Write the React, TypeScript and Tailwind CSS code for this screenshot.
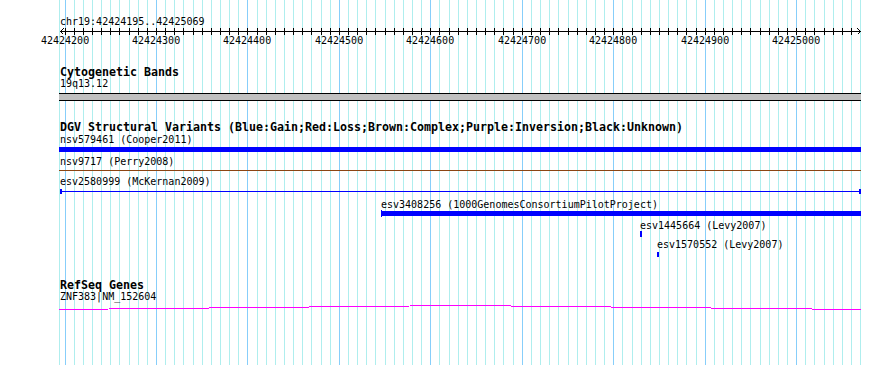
import React from 'react'

// genome coordinates -> pixels (same scale as the ruler)
const START = 42424200
const PX = 0.91456
const xOf = (pos: number) => Math.floor(65 + (pos - START) * PX)

const gridPositions = Array.from({ length: 88 }, (_, i) => START + i * 10)
const majorLabels = [42424200, 42424300, 42424400, 42424500, 42424600, 42424700, 42424800, 42424900, 42425000]

function Grid() {
  return (
    <svg className="absolute inset-0" width={890} height={365} shapeRendering="crispEdges">
      <line x1={59.5} y1={0} x2={59.5} y2={365} stroke="#afeeee" />
      {gridPositions.map((p) => (
        <line
          key={p}
          x1={xOf(p) + 0.5}
          y1={0}
          x2={xOf(p) + 0.5}
          y2={365}
          stroke={p % 100 === 0 ? '#87cefa' : '#afeeee'}
        />
      ))}
    </svg>
  )
}

function Ruler() {
  return (
    <svg width={890} height={7} className="block" shapeRendering="crispEdges">
      <line x1={60} y1={3.5} x2={861} y2={3.5} stroke="#000" />
      {gridPositions.slice(0, 87).map((p) => (
        <line key={p} x1={xOf(p) + 0.5} y1={0} x2={xOf(p) + 0.5} y2={7} stroke="#000" />
      ))}
      <polyline points="63.5,0.5 60.5,3.5 63.5,6.5" fill="none" stroke="#000" />
      <polyline points="857.5,0.5 860.5,3.5 857.5,6.5" fill="none" stroke="#000" />
    </svg>
  )
}

export default function App() {
  return (
    <div className="relative w-[890px] h-[365px] bg-white overflow-hidden font-['DejaVu_Sans_Mono','Liberation_Mono',monospace] text-[10px] text-black whitespace-pre">
      <Grid />
      <div className="relative pt-[16px]">
        {/* ruler */}
        <div className="h-[12px] leading-[12px] pl-[60px]">chr19:42424195..42425069</div>
        <Ruler />
        <div className="relative h-[13px] leading-[12px]">
          {majorLabels.map((p) => (
            <span key={p} className="absolute top-0" style={{ left: xOf(p) - 24 }}>
              {p}
            </span>
          ))}
        </div>

        {/* Cytogenetic Bands */}
        <div className="mt-[18px] h-[12px] leading-[12px] pl-[60px] font-bold text-[11.63px]">Cytogenetic Bands</div>
        <div className="h-[13px] leading-[12px] pl-[60px]">19q13.12</div>
        <div className="mt-[2px] ml-[59px] w-[802px] h-[8px] border-y border-black bg-[#c0c0c0]" />

        {/* DGV */}
        <div className="mt-[20px] h-[13px] leading-[13px] pl-[60px] font-bold text-[11.63px]">
          DGV Structural Variants (Blue:Gain;Red:Loss;Brown:Complex;Purple:Inversion;Black:Unknown)
        </div>
        <div className="h-[13px] leading-[12px] pl-[60px]">nsv579461 (Cooper2011)</div>
        <div className="ml-[59px] w-[802px] h-[5px] bg-[#0000ff]" />

        <div className="mt-[4px] h-[13px] leading-[12px] pl-[60px]">nsv9717 (Perry2008)</div>
        <div className="mt-[1px] ml-[59px] w-[802px] h-px bg-[#8b4513]" />

        <div className="mt-[5px] h-[13px] leading-[12px] pl-[60px]">esv2580999 (McKernan2009)</div>
        <div className="ml-[60px] w-[801px] h-[5px] flex items-center">
          <div className="w-[2px] h-full bg-[#0000ff]" />
          <div className="flex-1 h-px bg-[#0000ff]" />
          <div className="w-[2px] h-full bg-[#0000ff]" />
        </div>

        <div className="mt-[5px] h-[11px] leading-[11px] pl-[381px]">esv3408256 (1000GenomesConsortiumPilotProject)</div>
        <div className="ml-[381px] w-[480px] h-[7px] flex items-center">
          <div className="w-px h-full bg-[#0000ff]" />
          <div className="flex-1 h-[5px] bg-[#0000ff]" />
        </div>

        <div className="mt-[3px] h-[11px] leading-[11px] pl-[640px]">esv1445664 (Levy2007)</div>
        <div className="ml-[640px] w-[2px] h-[6px] bg-[#0000ff]" />

        <div className="mt-[2px] h-[13px] leading-[12px] pl-[657px]">esv1570552 (Levy2007)</div>
        <div className="ml-[657px] w-[2px] h-[5px] bg-[#0000ff]" />

        {/* RefSeq Genes */}
        <div className="mt-[23px] h-[11px] leading-[11px] pl-[60px] font-bold text-[11.63px]">RefSeq Genes</div>
        <div className="h-[13px] leading-[12px] pl-[60px]">ZNF383|NM_152604</div>
        <svg width={890} height={7} className="block" shapeRendering="crispEdges">
          <polyline points="59,5.5 460,1.5 861,5.5" fill="none" stroke="#ff00ff" strokeWidth={1} />
        </svg>
      </div>
    </div>
  )
}
